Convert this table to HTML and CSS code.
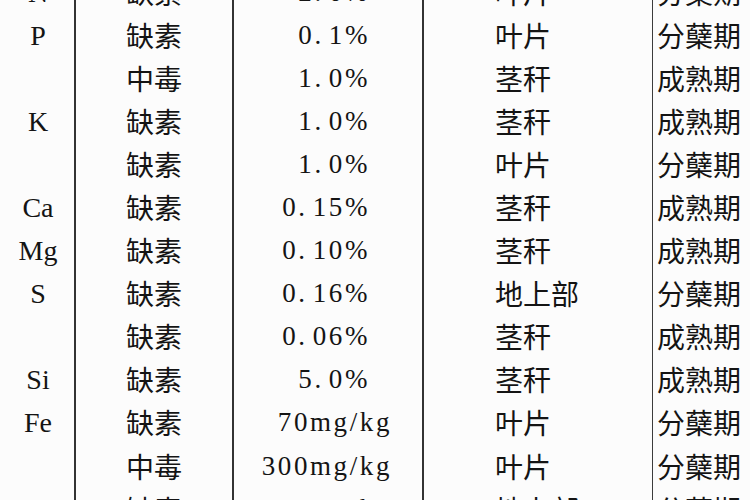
FILE: index.html
```html
<!DOCTYPE html>
<html lang="zh-CN">
<head>
<meta charset="utf-8">
<title>水稻营养元素临界含量</title>
<link rel="stylesheet" href="styles.css">
</head>
<body>
<div class="sheet">
  <div class="grid">
    <div class="c el">N</div><div class="c st">缺素</div><div class="c val">2<span class="dot">.</span>0%</div><div class="c part">叶片</div><div class="c stage">分蘖期</div>
    <div class="c el">P</div><div class="c st">缺素</div><div class="c val">0<span class="dot">.</span>1%</div><div class="c part">叶片</div><div class="c stage">分蘖期</div>
    <div class="c el"></div><div class="c st">中毒</div><div class="c val">1<span class="dot">.</span>0%</div><div class="c part">茎秆</div><div class="c stage">成熟期</div>
    <div class="c el">K</div><div class="c st">缺素</div><div class="c val">1<span class="dot">.</span>0%</div><div class="c part">茎秆</div><div class="c stage">成熟期</div>
    <div class="c el"></div><div class="c st">缺素</div><div class="c val">1<span class="dot">.</span>0%</div><div class="c part">叶片</div><div class="c stage">分蘖期</div>
    <div class="c el">Ca</div><div class="c st">缺素</div><div class="c val">0<span class="dot">.</span>15%</div><div class="c part">茎秆</div><div class="c stage">成熟期</div>
    <div class="c el">Mg</div><div class="c st">缺素</div><div class="c val">0<span class="dot">.</span>10%</div><div class="c part">茎秆</div><div class="c stage">成熟期</div>
    <div class="c el">S</div><div class="c st">缺素</div><div class="c val">0<span class="dot">.</span>16%</div><div class="c part">地上部</div><div class="c stage">分蘖期</div>
    <div class="c el"></div><div class="c st">缺素</div><div class="c val">0<span class="dot">.</span>06%</div><div class="c part">茎秆</div><div class="c stage">成熟期</div>
    <div class="c el">Si</div><div class="c st">缺素</div><div class="c val">5<span class="dot">.</span>0%</div><div class="c part">茎秆</div><div class="c stage">成熟期</div>
    <div class="c el">Fe</div><div class="c st">缺素</div><div class="c val mg">70mg/kg</div><div class="c part">叶片</div><div class="c stage">分蘖期</div>
    <div class="c el"></div><div class="c st">中毒</div><div class="c val mg">300mg/kg</div><div class="c part">叶片</div><div class="c stage">分蘖期</div>
    <div class="c el">Zn</div><div class="c st">缺素</div><div class="c val mg">10mg/kg</div><div class="c part">地上部</div><div class="c stage">分蘖期</div>
  </div>
</div>
</body>
</html>
```

FILE: styles.css
```css
html, body {
  margin: 0;
  padding: 0;
  background: #fdfdfd;
}

.sheet {
  width: 750px;
  height: 500px;
  overflow: hidden;
  background: #fcfcfc;
}

.grid {
  display: grid;
  grid-template-columns: 74px 158px 190px 230px 98px;
  grid-auto-rows: 43.1px;
  margin-top: -29.5px;
  color: #141414;
}

.c {
  line-height: 43.1px;
  white-space: nowrap;
  font-family: "Noto Sans CJK SC", sans-serif;
  font-size: 28px;
  font-weight: 400;
}

.el {
  text-align: center;
  font-family: "Liberation Serif", serif;
  font-size: 28px;
  padding-left: 2px;
}

.st {
  border-left: 2px solid #333;
  text-align: center;
}

.val {
  border-left: 2px solid #333;
  text-align: right;
  padding-right: 52px;
  font-family: "Liberation Serif", serif;
  font-size: 27px;
  letter-spacing: 2.6px;
}

.val.mg {
  padding-right: 30px;
}

.dot {
  margin-right: 5px;
}

.part {
  border-left: 2px solid #333;
  padding-left: 71px;
}

.stage {
  border-left: 1.5px solid #3c3c3c;
  padding-left: 4px;
}
```
